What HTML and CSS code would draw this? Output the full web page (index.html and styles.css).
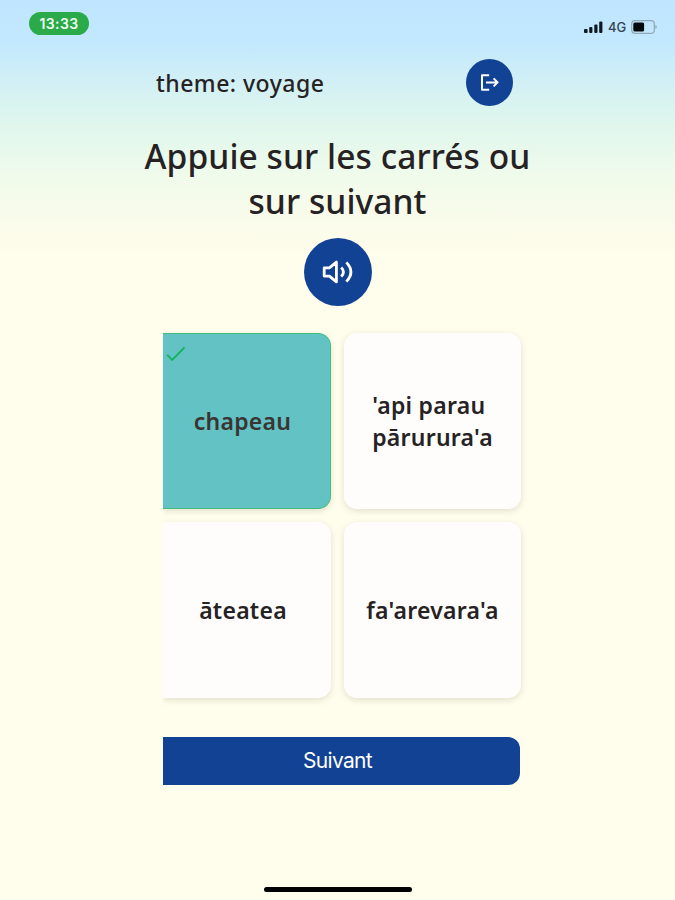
FILE: index.html
```html
<!DOCTYPE html>
<html lang="fr">
<head>
<meta charset="utf-8">
<title>theme: voyage</title>
<link rel="stylesheet" href="styles.css">
</head>
<body>
<div class="screen">
  <div class="status-bar">
    <span class="clock">13:33</span>
    <div class="indicators">
      <svg class="signal" width="19" height="12" viewBox="0 0 19 12">
        <rect x="0" y="8" width="3.6" height="4" rx="1"/>
        <rect x="5.2" y="6" width="3.2" height="6" rx="1"/>
        <rect x="10.3" y="3.5" width="3.2" height="8.5" rx="1"/>
        <rect x="15.2" y="0.5" width="3.2" height="11.5" rx="1"/>
      </svg>
      <span class="network">4G</span>
      <svg class="battery" width="26" height="14" viewBox="0 0 26 14">
        <rect class="shell" x="0.7" y="0.7" width="22.6" height="12.6" rx="3.4"/>
        <rect x="2.3" y="2.6" width="10.8" height="8.8" rx="1.5"/>
        <path class="cap" d="M24.4 4.8q1.4 .7 1.4 2.2t-1.4 2.2z"/>
      </svg>
    </div>
  </div>

  <header class="header">
    <span class="theme">theme: voyage</span>
    <button class="round exit" aria-label="Quitter">
      <svg width="20" height="18" viewBox="0 0 20 18">
        <path d="M9.2 1.3H2v14.4h7.2M6 8.4h11.6M13.6 4.4l4 4-4 4"/>
      </svg>
    </button>
  </header>

  <h1 class="title">Appuie sur les carrés ou<br>sur suivant</h1>

  <button class="round sound" aria-label="Écouter">
    <svg width="32" height="24" viewBox="0 0 32 24">
      <path d="M2.2 7.9h5.2l7-5.8v19.8l-7-5.8H2.2zM19.2 7.4q4.6 4.6 0 9.2M24.4 2.4q9 9.6 0 19.2"/>
    </svg>
  </button>

  <main class="content">
    <div class="grid">
      <div class="card left selected">
        <svg class="check" width="20" height="16" viewBox="0 0 20 16"><path d="M1.2 8.9l5 5.1L18.5 1.5"/></svg>
        <span class="word">chapeau</span>
      </div>
      <div class="card"><span class="word">'api parau<br>pārurura'a</span></div>
      <div class="card left"><span class="word">āteatea</span></div>
      <div class="card"><span class="word">fa'arevara'a</span></div>
    </div>
    <button class="next">Suivant</button>
  </main>

  <div class="home-indicator"></div>
</div>
</body>
</html>
```
FILE: styles.css
```css
* { box-sizing: border-box; }

body {
  margin: 0;
  font-family: "Noto Sans", sans-serif;
  color: #262224;
}

button {
  border: 0;
  padding: 0;
  background: #124294;
  color: #fff;
}

.screen {
  width: 675px;
  height: 900px;
  display: flex;
  flex-direction: column;
  align-items: center;
  overflow: hidden;
  background: linear-gradient(#c0e6ff 0, #c1e8fe 40px, #cdedf8 69px, #daf4ef 107px, #e5f8ec 142px, #f1fbeb 180px, #f9fbea 218px, #fffdec 254px);
}

.status-bar {
  width: 100%;
  height: 59px;
  padding: 12px 18px 0 29px;
  display: flex;
  justify-content: space-between;
  align-items: flex-start;
}

.clock {
  width: 60px;
  height: 23px;
  border-radius: 12px;
  background: #2baa4a;
  color: #effff0;
  font: 600 14px/23px Inter, sans-serif;
  letter-spacing: 0.4px;
  text-align: center;
}

.indicators {
  display: flex;
  align-items: center;
  padding-top: 7px;
  height: 23px;
}

.signal { fill: #101820; }

.network {
  margin: 0 5px;
  width: 18px;
  font: 500 13px/15px Inter, sans-serif;
  color: #344453;
}

.battery { fill: #05090c; }
.battery .shell { fill: none; stroke: #91a9b7; stroke-width: 1.2; }
.battery .cap { fill: #91a9b7; }

.header {
  width: 357px;
  height: 47px;
  margin-left: 18px;
  margin-right: 24px;
  display: flex;
  align-items: center;
  justify-content: space-between;
}

.theme {
  font-size: 23px;
  font-weight: 500;
  line-height: 32px;
  letter-spacing: 0.48px;
  white-space: nowrap;
}

.round {
  display: flex;
  align-items: center;
  justify-content: center;
  flex: none;
  border-radius: 50%;
}

.round svg { fill: none; stroke: #fff; stroke-linejoin: round; }
.exit { width: 47px; height: 47px; }
.exit svg { stroke-width: 2; }

.title {
  margin: 28px 0 0;
  font-size: 33.5px;
  font-weight: 500;
  line-height: 45px;
  letter-spacing: 0.08px;
  text-align: center;
  white-space: nowrap;
}

.sound { width: 68px; height: 68px; margin-top: 14px; }
.sound svg { stroke-width: 2.8; }

.content {
  width: 376px;
  margin-top: 15px;
  margin-left: 27px;
  padding: 12px 9px 12px 0;
  overflow: hidden;
}

.grid {
  display: grid;
  grid-template-columns: 168px 177px;
  grid-auto-rows: 176px;
  gap: 13px;
}

.card {
  position: relative;
  display: flex;
  align-items: center;
  justify-content: center;
  border-radius: 13px;
  background: #fefdfc;
  box-shadow: 0 2px 6px rgba(80, 85, 50, 0.17);
}

.card.left { border-radius: 0 13px 13px 0; padding-right: 8px; }

.card.selected {
  background: #63c2c4;
  border: 1px solid #43bd7e;
  border-left: 0;
}

.card.selected .word { color: #3a3533; }

.check {
  position: absolute;
  left: 3px;
  top: 12px;
  fill: none;
  stroke: #16b35d;
  stroke-width: 1.8;
}

.word {
  font-size: 23px;
  font-weight: 600;
  line-height: 32px;
  letter-spacing: 0.25px;
  white-space: nowrap;
}

.next {
  display: block;
  width: 357px;
  height: 48px;
  margin-top: 39px;
  padding-right: 8px;
  border-radius: 0 12px 12px 0;
  font: 400 21px/48px Inter, sans-serif;
  letter-spacing: -0.65px;
}

.home-indicator {
  width: 148px;
  height: 5px;
  margin-top: auto;
  margin-bottom: 8px;
  border-radius: 3px;
  background: #000;
}
```
